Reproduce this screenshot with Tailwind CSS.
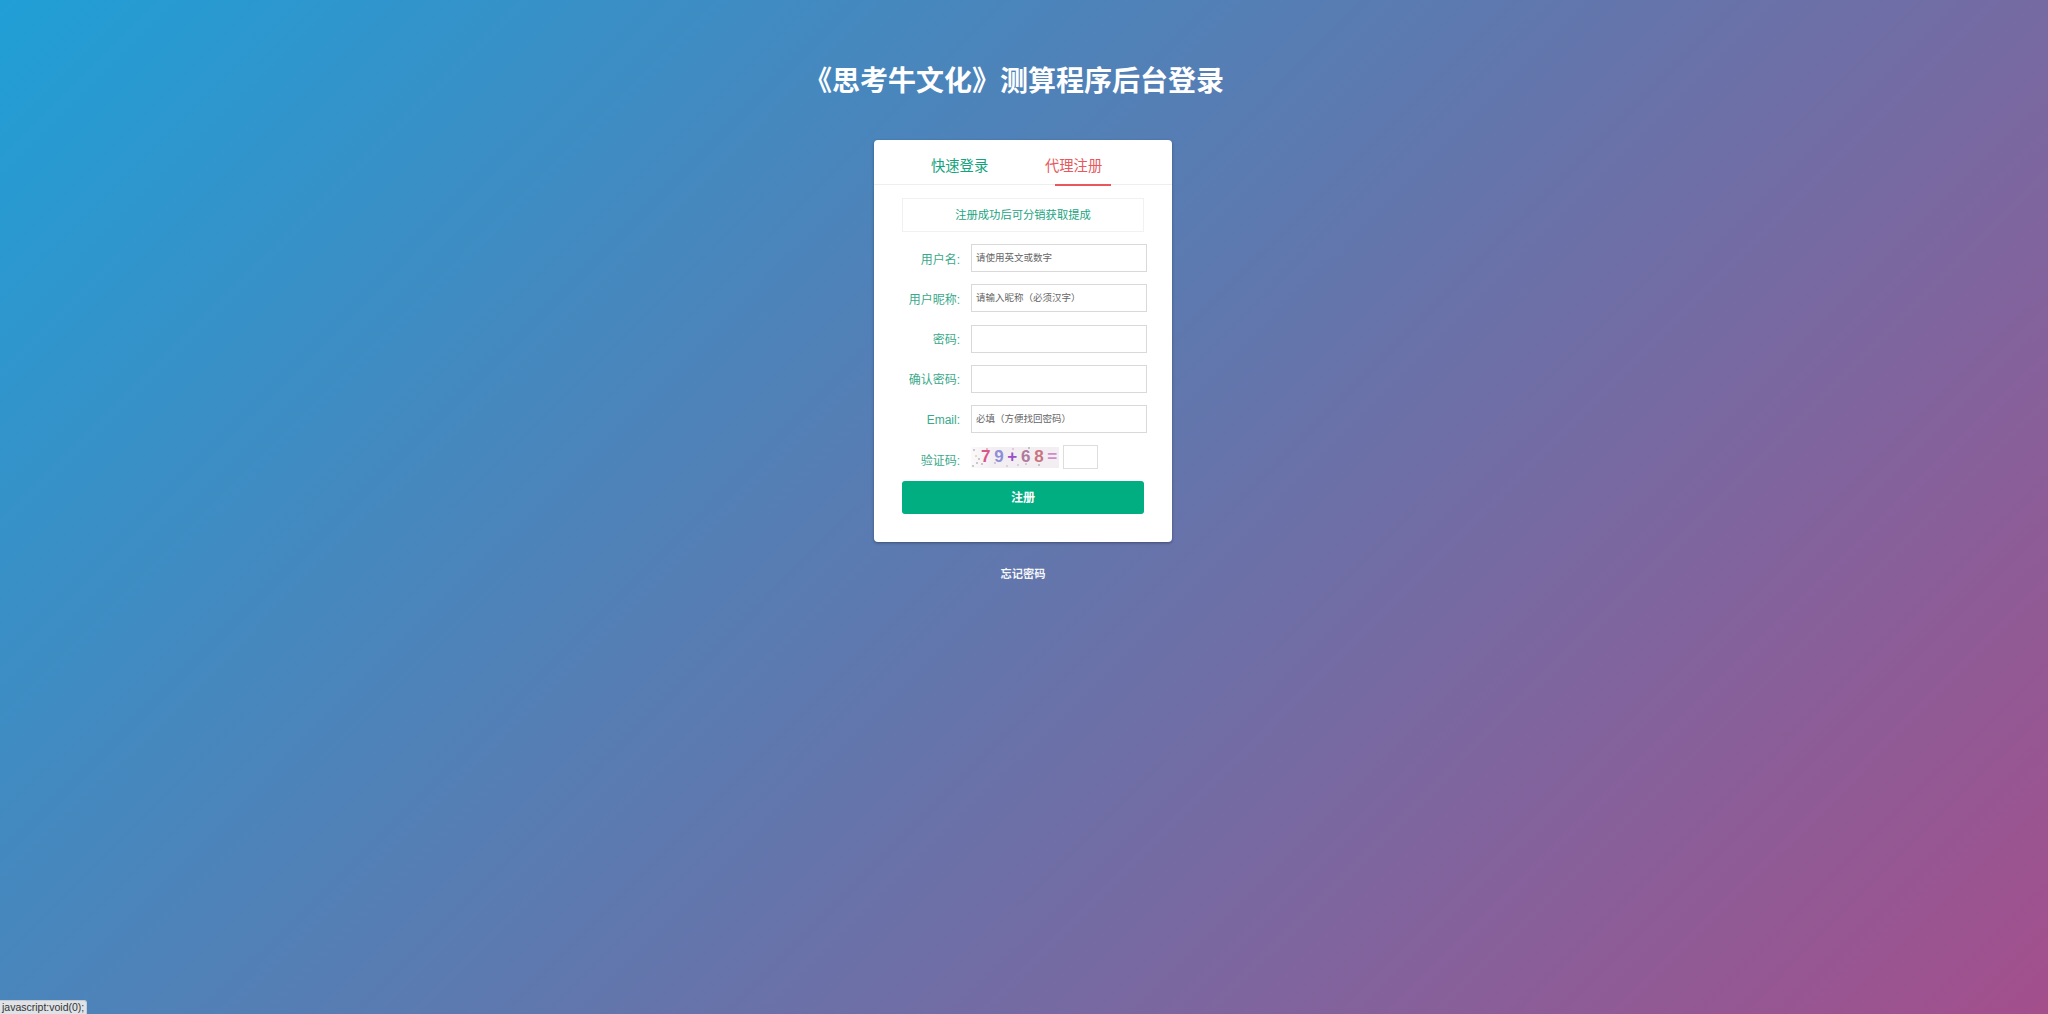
<!DOCTYPE html>
<html lang="zh">
<head>
<meta charset="utf-8">
<title>后台登录</title>
<script src="https://cdn.jsdelivr.net/npm/@tailwindcss/browser@4"></script>
</head>
<body class="m-0 h-[1014px] overflow-hidden font-['Liberation_Sans','Noto_Sans_CJK_SC',sans-serif]">
<div class="relative flex h-[1014px] w-full flex-col items-center bg-[linear-gradient(135deg,#209fd6_0%,#5f78ae_50%,#a34f8c_100%)]">
  <h1 class="mt-[61px] mr-[20px] h-[42px] text-[28px] leading-[42px] font-bold text-white">《思考牛文化》测算程序后台登录</h1>
  <div class="mt-[37px] mr-[2px] h-[402px] w-[298px] rounded-[4px] bg-white shadow-[0_1px_3px_rgba(0,0,0,0.35)]">
    <div class="flex h-[45px] border-b border-[#eeeeee] pl-[57px] text-[14.3px]">
      <a class="mt-[16px] w-[114px] text-[#14a37c]">快速登录</a>
      <a class="relative mt-[16px] text-[#e8585c]">代理注册<span class="absolute top-[28px] left-[10px] h-[2px] w-[56px] bg-[#e8585c]"></span></a>
    </div>
    <div class="mx-[28px] mt-[13px] flex h-[34px] w-[242px] items-center justify-center border border-[#f1f1f1] text-[11.3px] text-[#1aa481]">注册成功后可分销获取提成</div>
    <form class="mt-[12px] flex flex-col gap-[12.25px] text-xs">
      <div class="flex h-[28px] items-center"><label class="w-[86px] pt-[3px] text-right text-[#3aa98a]">用户名:</label><div class="ml-[11px] flex h-[28px] w-[176px] items-center border border-[#d9d9d9] pl-[4px] text-[9.5px] text-[#666666]">请使用英文或数字</div></div>
      <div class="flex h-[28px] items-center"><label class="w-[86px] pt-[3px] text-right text-[#3aa98a]">用户昵称:</label><div class="ml-[11px] flex h-[28px] w-[176px] items-center border border-[#d9d9d9] pl-[4px] text-[9.5px] text-[#666666]">请输入昵称（必须汉字）</div></div>
      <div class="flex h-[28px] items-center"><label class="w-[86px] pt-[3px] text-right text-[#3aa98a]">密码:</label><div class="ml-[11px] h-[28px] w-[176px] border border-[#d9d9d9]"></div></div>
      <div class="flex h-[28px] items-center"><label class="w-[86px] pt-[3px] text-right text-[#3aa98a]">确认密码:</label><div class="ml-[11px] h-[28px] w-[176px] border border-[#d9d9d9]"></div></div>
      <div class="flex h-[28px] items-center"><label class="w-[86px] pt-[2px] text-right text-[#3aa98a]">Email:</label><div class="ml-[11px] flex h-[28px] w-[176px] items-center border border-[#d9d9d9] pl-[4px] text-[9.5px] text-[#666666]">必填（方便找回密码）</div></div>
      <div class="flex h-[24px] items-center"><label class="w-[86px] pt-[7px] text-right text-[#3aa98a]">验证码:</label>
        <div class="relative ml-[11px] h-[21px] w-[88px] bg-[linear-gradient(90deg,#fbf9fb_0%,#f3eef2_25%,#f3eef2_100%)] text-[17px] leading-[20px]">
          <svg class="absolute inset-0" width="88" height="21" viewBox="0 0 88 21" fill="#777"><circle cx="3" cy="3" r=".7"/><circle cx="8" cy="12" r=".7"/><circle cx="2" cy="19" r=".7"/><circle cx="11" cy="17" r=".7"/><circle cx="6" cy="16" r=".7"/><circle cx="24" cy="16" r=".7" fill="#88a"/><circle cx="42" cy="2" r=".7" fill="#c8a"/><circle cx="58" cy="1" r=".7"/><circle cx="68" cy="18" r=".7"/><circle cx="47" cy="18" r=".7" fill="#8ac"/><circle cx="29" cy="5" r=".7"/><circle cx="16" cy="2" r=".7" fill="#c55"/><circle cx="5" cy="9" r=".7" fill="#ca5"/><circle cx="36" cy="19" r=".7" fill="#aaa"/><circle cx="55" cy="17" r=".7" fill="#b89"/></svg>
          <span class="relative flex pl-[8px] text-center font-bold"><span class="w-[13.5px] text-[#d9558a]">7</span><span class="w-[13.5px] text-[#8f8fd8]">9</span><span class="w-[13.5px] text-[#9b4fc9]">+</span><span class="w-[13.5px] text-[#b07a9c]">6</span><span class="w-[13.5px] text-[#c9747f]">8</span><span class="w-[13.5px] text-[#cf8dc9]">=</span></span>
        </div>
        <div class="ml-[4px] h-[24px] w-[35px] border border-[#dddddd]"></div>
      </div>
    </form>
    <button class="mx-[28px] mt-[12px] block h-[33px] w-[242px] rounded-[3px] bg-[#00ae82] text-xs font-bold text-white">注册</button>
  </div>
  <a class="mt-[24px] mr-[2px] text-[11.3px] leading-[16px] font-bold text-white/95">忘记密码</a>
  <div class="absolute bottom-0 left-0 h-[14px] w-[87px] rounded-tr-[3px] border-t border-r border-[#c8ccd0] bg-[#dfe3e7] pl-[2px] text-[10.5px] leading-[13px] text-[#333333]">javascript:void(0);</div>
</div>
</body>
</html>
